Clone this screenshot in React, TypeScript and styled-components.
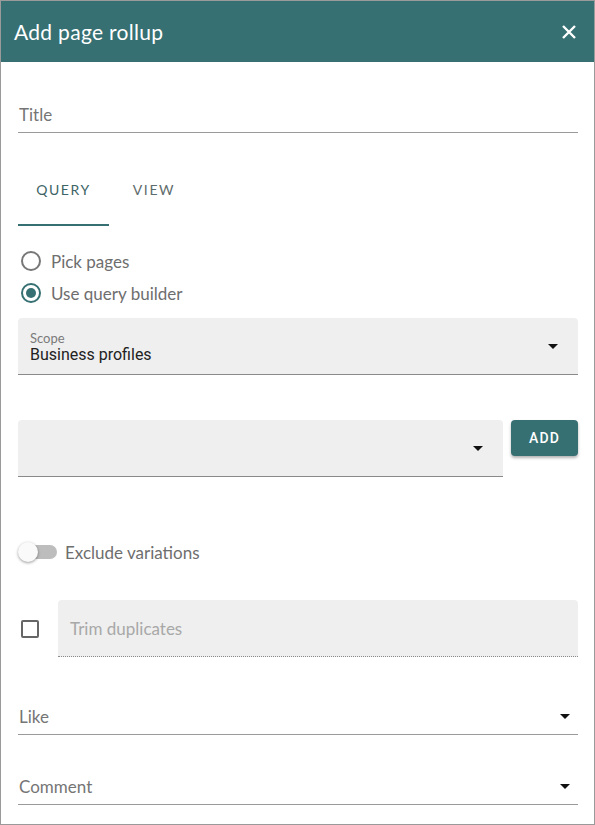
import React from 'react';
import styled, { createGlobalStyle } from 'styled-components';

const teal = '#367073';

const GlobalStyle = createGlobalStyle`
  html, body {
    margin: 0;
    padding: 0;
    background: #ffffff;
  }
  * {
    box-sizing: border-box;
  }
`;

const Dialog = styled.div`
  width: 595px;
  height: 825px;
  border: 1px solid #9a9a9a;
  background: #fff;
  font-family: Lato, 'Open Sans', sans-serif;
  display: flex;
  flex-direction: column;
  overflow: hidden;
`;

const Header = styled.div`
  height: 61px;
  background: ${teal};
  display: flex;
  align-items: center;
  justify-content: space-between;
  padding: 0 16px 0 13px;
  color: #fff;
  flex-shrink: 0;

  h1 {
    margin: 0;
    font-size: 21px;
    font-weight: 400;
    letter-spacing: 0.3px;
  }
`;

const CloseButton = styled.button`
  border: 0;
  background: none;
  padding: 0;
  width: 18px;
  height: 18px;
  display: flex;
  align-items: center;
  justify-content: center;
  cursor: pointer;
`;

const Body = styled.div`
  padding: 0 16px 0 17px;
  display: flex;
  flex-direction: column;
`;

const LineField = styled.div<{ $top: number }>`
  margin-top: ${(p) => p.$top}px;
  height: 37px;
  border-bottom: 1px solid #9a9a9a;
  display: flex;
  align-items: center;
  justify-content: space-between;
  padding: 0 8px 0 1px;
  font-size: 17px;
  color: #757575;
`;

const Tabs = styled.div`
  margin-top: 30px;
  display: flex;
  height: 63px;
`;

const Tab = styled.div<{ $active?: boolean; $width: number }>`
  width: ${(p) => p.$width}px;
  display: flex;
  align-items: center;
  justify-content: center;
  padding-bottom: 8px;
  font-size: 14px;
  letter-spacing: 1.6px;
  color: ${(p) => (p.$active ? '#3d6466' : '#5e6b6c')};
  border-bottom: 2px solid ${(p) => (p.$active ? teal : 'transparent')};
`;

const RadioGroup = styled.div`
  margin-top: 25px;
  display: flex;
  flex-direction: column;
  gap: 12px;
`;

const RadioRow = styled.label`
  display: flex;
  align-items: center;
  gap: 10px;
  padding-left: 3px;
  font-size: 17px;
  color: #6e6e6e;
  height: 20px;
`;

const RadioCircle = styled.span<{ $checked?: boolean }>`
  width: 20px;
  height: 20px;
  border-radius: 50%;
  border: 2px solid ${(p) => (p.$checked ? teal : '#777')};
  display: flex;
  align-items: center;
  justify-content: center;

  &::after {
    content: '';
    width: 10px;
    height: 10px;
    border-radius: 50%;
    background: ${(p) => (p.$checked ? teal : 'transparent')};
  }
`;

const FilledSelect = styled.div<{ $top?: number; $grow?: boolean }>`
  margin-top: ${(p) => p.$top ?? 0}px;
  flex: ${(p) => (p.$grow ? '1 1 auto' : '0 0 auto')};
  height: 57px;
  background: #efefef;
  border-radius: 4px 4px 0 0;
  border-bottom: 1px solid #8a8a8a;
  display: flex;
  align-items: center;
  justify-content: space-between;
  padding: 0 20px 0 12px;
`;

const SelectText = styled.div`
  display: flex;
  flex-direction: column;
  padding-top: 4px;

  small {
    font-size: 13px;
    color: #7a7a7a;
    line-height: 14px;
  }
  span {
    font-family: Roboto, 'Noto Sans', sans-serif;
    font-size: 16px;
    color: #222;
    line-height: 20px;
  }
`;

const Arrow = styled.span`
  width: 0;
  height: 0;
  border-left: 5px solid transparent;
  border-right: 5px solid transparent;
  border-top: 5px solid #111;
`;

const AddRow = styled.div`
  margin-top: 45px;
  display: flex;
  align-items: flex-start;
  gap: 8px;
`;

const AddButton = styled.button`
  width: 67px;
  height: 36px;
  border: 0;
  border-radius: 4px;
  background: ${teal};
  color: #fff;
  font-family: Roboto, sans-serif;
  font-size: 14px;
  font-weight: 500;
  letter-spacing: 1.2px;
  box-shadow: 0 2px 3px rgba(0, 0, 0, 0.3);
`;

const SwitchRow = styled.div`
  margin-top: 64px;
  display: flex;
  align-items: center;
  gap: 8px;
  font-size: 17px;
  color: #6e6e6e;
  height: 22px;
`;

const Switch = styled.span`
  position: relative;
  width: 36px;
  height: 14px;
  margin-left: 3px;
  border-radius: 7px;
  background: #bdbdbd;

  &::after {
    content: '';
    position: absolute;
    left: -3px;
    top: -3px;
    width: 20px;
    height: 20px;
    border-radius: 50%;
    background: #fafafa;
    box-shadow: 0 1px 3px rgba(0, 0, 0, 0.4);
  }
`;

const TrimRow = styled.div`
  margin-top: 37px;
  display: flex;
  align-items: center;
  gap: 19px;
`;

const Checkbox = styled.span`
  width: 18px;
  height: 18px;
  margin-left: 3px;
  border: 2px solid #666;
  border-radius: 2px;
  flex-shrink: 0;
`;

const DisabledField = styled.div`
  flex: 1;
  height: 57px;
  background: #efefef;
  border-radius: 4px 4px 0 0;
  border-bottom: 1px dotted #8a8a8a;
  display: flex;
  align-items: center;
  padding: 0 12px;
  font-size: 17px;
  color: #a8a8a8;
`;

const App: React.FC = () => {
  return (
    <>
      <GlobalStyle />
      <Dialog>
        <Header>
          <h1>Add page rollup</h1>
          <CloseButton aria-label="Close">
            <svg width="14" height="14" viewBox="0 0 14 14">
              <path d="M1 1 L13 13 M13 1 L1 13" stroke="#fff" strokeWidth="2.4" />
            </svg>
          </CloseButton>
        </Header>
        <Body>
          <LineField $top={34}>Title</LineField>

          <Tabs>
            <Tab $active $width={91}>QUERY</Tab>
            <Tab $width={90}>VIEW</Tab>
          </Tabs>

          <RadioGroup>
            <RadioRow>
              <RadioCircle />
              Pick pages
            </RadioRow>
            <RadioRow>
              <RadioCircle $checked />
              Use query builder
            </RadioRow>
          </RadioGroup>

          <FilledSelect $top={15}>
            <SelectText>
              <small>Scope</small>
              <span>Business profiles</span>
            </SelectText>
            <Arrow />
          </FilledSelect>

          <AddRow>
            <FilledSelect $grow>
              <span />
              <Arrow />
            </FilledSelect>
            <AddButton>ADD</AddButton>
          </AddRow>

          <SwitchRow>
            <Switch />
            Exclude variations
          </SwitchRow>

          <TrimRow>
            <Checkbox />
            <DisabledField>Trim duplicates</DisabledField>
          </TrimRow>

          <LineField $top={41}>
            Like
            <Arrow />
          </LineField>
          <LineField $top={33}>
            Comment
            <Arrow />
          </LineField>
        </Body>
      </Dialog>
    </>
  );
};

export default App;
